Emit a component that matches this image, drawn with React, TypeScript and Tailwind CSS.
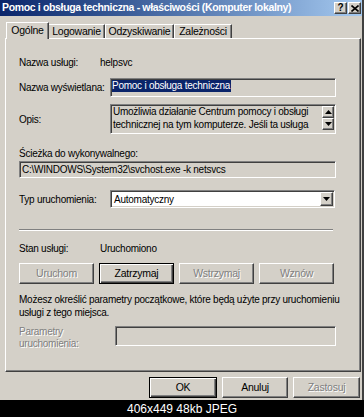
import React from "react";

const raised =
  "bg-[#d4d0c8] border border-t-white border-l-white border-r-[#404040] border-b-[#404040] shadow-[inset_-1px_-1px_0_#808080]";
const sunken =
  "border border-t-[#808080] border-l-[#808080] border-r-white border-b-white shadow-[inset_1px_1px_0_#404040,inset_-1px_-1px_0_#d4d0c8]";
const disabledText = "text-[#808080] [text-shadow:1px_1px_0_#ffffff]";

function Arrow({ up }: { up?: boolean }) {
  return (
    <svg width="7" height="4" viewBox="0 0 7 4">
      {up ? <path d="M3.5 0 L7 4 L0 4 Z" fill="#000" /> : <path d="M0 0 L7 0 L3.5 4 Z" fill="#000" />}
    </svg>
  );
}

function Button({
  label,
  width,
  disabled,
  isDefault,
}: {
  label: string;
  width: string;
  disabled?: boolean;
  isDefault?: boolean;
}) {
  const frame = isDefault
    ? "border border-black bg-[#d4d0c8] shadow-[inset_1px_1px_0_#fff,inset_-1px_-1px_0_#404040,inset_-2px_-2px_0_#808080]"
    : raised;
  return (
    <div className={`${frame} ${width} h-[21px] flex items-center justify-center text-[10.5px]`}>
      <span className={disabled ? disabledText : "text-black"}>{label}</span>
    </div>
  );
}

function TitleButton({ children }: { children: React.ReactNode }) {
  return (
    <div className={`${raised} w-[13px] h-[12px] flex items-center justify-center`}>{children}</div>
  );
}

export default function App() {
  return (
    <div className="w-[364px] h-[417px] bg-[#d4d0c8] flex flex-col overflow-hidden font-['Liberation_Sans',Arial,sans-serif] text-[10px] tracking-[-0.25px] whitespace-nowrap text-black">
      <div className="h-[400px] flex flex-col border-r-2 border-r-[#404040]">
        {/* title bar */}
        <div className="h-[16px] flex items-center pl-[2px] pr-[1px] bg-linear-to-r from-[#0a246a] to-[#a6caf0]">
          <span className="text-white font-bold text-[10.5px] tracking-[-0.35px]">
            Pomoc i obsługa techniczna - właściwości (Komputer lokalny)
          </span>
          <div className="ml-auto flex gap-[1px] tracking-normal">
            <TitleButton>
              <span className="font-bold text-[10px] leading-[10px]">?</span>
            </TitleButton>
            <TitleButton>
              <svg width="8" height="7" viewBox="0 0 8 7">
                <path d="M0.5 0.5 L7.5 6.5 M7.5 0.5 L0.5 6.5" stroke="#000" strokeWidth="1.6" />
              </svg>
            </TitleButton>
          </div>
        </div>

        <div className="flex flex-col pl-[5px] pr-[1px]">
          {/* tabs */}
          <div className="mt-[6px] h-[16px] flex items-end pl-[1px] text-[10.5px]">
            <div className="relative z-10 -mb-px h-[17px] w-[43px] bg-[#d4d0c8] border-t border-l border-white border-r border-r-[#404040] shadow-[inset_-1px_0_0_#808080] flex items-center justify-center">
              Ogólne
            </div>
            <div className="h-[14px] w-[56px] border-t border-white border-r border-r-[#404040] shadow-[inset_-1px_0_0_#808080] flex items-center justify-center">
              Logowanie
            </div>
            <div className="h-[14px] w-[69px] border-t border-l border-white border-r border-r-[#404040] shadow-[inset_-1px_0_0_#808080] flex items-center justify-center">
              Odzyskiwanie
            </div>
            <div className="h-[14px] w-[58px] border-t border-l border-white border-r border-r-[#404040] shadow-[inset_-1px_0_0_#808080] flex items-center justify-center">
              Zależności
            </div>
          </div>

          {/* panel */}
          <div className="h-[334px] border border-t-white border-l-white border-r-[#404040] border-b-[#404040] shadow-[inset_-1px_-1px_0_#808080] pl-[13px] flex flex-col">
            <div className="mt-[17px] h-[13px] leading-[13px] flex">
              <span className="w-[81px]">Nazwa usługi:</span>
              <span>helpsvc</span>
            </div>

            <div className="mt-[9px] h-[19px] flex items-center">
              <span className="w-[91px]">Nazwa wyświetlana:</span>
              <div className={`${sunken} w-[226px] h-[19px] bg-[#d4d0c8] flex items-start pt-[1px] pl-px`}>
                <span className="bg-[#0a246a] text-white leading-[12px] pr-px">Pomoc i obsługa techniczna</span>
              </div>
            </div>

            <div className="mt-[7px] h-[30px] flex items-center">
              <span className="w-[91px]">Opis:</span>
              <div className={`${sunken} w-[226px] h-[30px] bg-[#d4d0c8] flex`}>
                <div className="flex-1 pl-[2px] pt-[1px] leading-[12.5px]">
                  <div>Umożliwia działanie Centrum pomocy i obsługi</div>
                  <div>technicznej na tym komputerze. Jeśli ta usługa</div>
                </div>
                <div className="w-[13px] flex flex-col pt-[1px] pr-px">
                  <div className={`${raised} h-[12px] flex items-center justify-center`}>
                    <Arrow up />
                  </div>
                  <div className={`${raised} h-[12px] flex items-center justify-center`}>
                    <Arrow />
                  </div>
                </div>
              </div>
            </div>

            <div className="mt-[13px] h-[13px] leading-[13px]">Ścieżka do wykonywalnego:</div>
            <div className={`${sunken} mt-[1px] w-[317px] h-[17px] bg-[#d4d0c8] flex items-center pl-[2px]`}>
              C:\WINDOWS\System32\svchost.exe -k netsvcs
            </div>

            <div className="mt-[12px] h-[18px] flex items-center">
              <span className="w-[91px]">Typ uruchomienia:</span>
              <div className={`${sunken} w-[225px] h-[18px] bg-white flex items-center pl-[3px]`}>
                <span className="flex-1">Automatyczny</span>
                <div className={`${raised} w-[13px] h-[14px] mr-px flex items-center justify-center`}>
                  <Arrow />
                </div>
              </div>
            </div>

            <div className="mt-[21px] w-[314px] h-[2px] border-t border-t-[#808080] border-b border-b-white" />

            <div className="mt-[11px] h-[13px] leading-[13px] flex">
              <span className="w-[81px]">Stan usługi:</span>
              <span>Uruchomiono</span>
            </div>

            <div className="mt-[8px] flex gap-[5px]">
              <Button label="Uruchom" width="w-[75px]" disabled />
              <Button label="Zatrzymaj" width="w-[75px]" isDefault />
              <Button label="Wstrzymaj" width="w-[75px]" disabled />
              <Button label="Wznów" width="w-[75px]" disabled />
            </div>

            <div className="mt-[9px] leading-[13px]">
              <div>Możesz określić parametry początkowe, które będą użyte przy uruchomieniu</div>
              <div>usługi z tego miejsca.</div>
            </div>

            <div className="mt-[7px] flex">
              <div className={`w-[96px] leading-[12px] ${disabledText}`}>
                <div>Parametry</div>
                <div>uruchomienia:</div>
              </div>
              <div className={`${sunken} w-[221px] h-[20px] bg-[#d4d0c8]`} />
            </div>
          </div>

          {/* dialog buttons */}
          <div className="mt-[5px] flex justify-end gap-[5px] pr-[1px]">
            <Button label="OK" width="w-[68px]" isDefault />
            <Button label="Anuluj" width="w-[66px]" />
            <Button label="Zastosuj" width="w-[67px]" disabled />
          </div>
        </div>
      </div>

      <div className="h-[17px] bg-black text-white text-[12px] tracking-normal flex items-center justify-center">
        406x449 48kb JPEG
      </div>
    </div>
  );
}
